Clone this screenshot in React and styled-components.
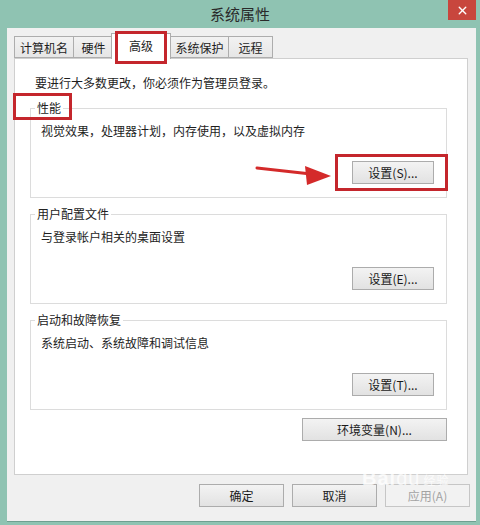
import React from 'react'
import styled, { createGlobalStyle } from 'styled-components'
import { X } from 'lucide-react'

const GlobalStyle = createGlobalStyle`
  html, body {
    margin: 0;
    padding: 0;
    background: #8fc3b2;
  }
  body {
    font-family: "Noto Sans CJK SC", "Noto Sans", sans-serif;
    font-size: 12px;
    color: #1e1e1e;
  }
`

const tabs = [
  { label: '计算机名', w: 60 },
  { label: '硬件', w: 41 },
  { label: '高级', w: 60, active: true },
  { label: '系统保护', w: 59 },
  { label: '远程', w: 45 },
]

const groups = [
  { title: '性能', desc: '视觉效果，处理器计划，内存使用，以及虚拟内存', btn: '设置(S)...' },
  { title: '用户配置文件', desc: '与登录帐户相关的桌面设置', btn: '设置(E)...' },
  { title: '启动和故障恢复', desc: '系统启动、系统故障和调试信息', btn: '设置(T)...' },
]

const App = () => {
  return (
    <>
      <GlobalStyle />
      <Window>
        <TitleBar>
          <span />
          <Title>系统属性</Title>
          <CloseButton>
            <X size={13} strokeWidth={2.6} color="#fff" />
          </CloseButton>
        </TitleBar>
        <Client>
          <TabStrip>
            {tabs.map((t) => (
              <Tab key={t.label} $w={t.w} $active={t.active}>
                {t.label}
              </Tab>
            ))}
          </TabStrip>
          <Panel>
            <Notice>要进行大多数更改，你必须作为管理员登录。</Notice>
            {groups.map((g) => (
              <Group key={g.title}>
                <Legend>{g.title}</Legend>
                <Desc>{g.desc}</Desc>
                <ButtonRow $top={22}>
                  <Button $w={82}>{g.btn}</Button>
                </ButtonRow>
              </Group>
            ))}
            <ButtonRow $top={6}>
              <Button $w={145}>环境变量(N)...</Button>
            </ButtonRow>
          </Panel>
          <DialogButtons>
            <Button $w={85}>确定</Button>
            <Button $w={85}>取消</Button>
            <Button $w={85} disabled>应用(A)</Button>
          </DialogButtons>
        </Client>

        {/* red annotation marks laid over the dialog */}
        <Mark style={{ left: 115, top: 31, width: 52, height: 33 }} />
        <Mark style={{ left: 13, top: 93, width: 59, height: 27 }} />
        <Mark style={{ left: 335, top: 154, width: 113, height: 37 }} />
        <Arrow width="80" height="30" viewBox="0 0 80 30">
          <line x1="2" y1="8" x2="56" y2="14" stroke="#d42a2a" strokeWidth="3" strokeLinecap="round" />
          <polygon points="76,16 50,6 52,25" fill="#d42a2a" />
        </Arrow>
        <Watermark>
          Bai<Paw>du</Paw>
          <small>经验</small>
        </Watermark>
      </Window>
    </>
  )
}

const Window = styled.div`
  position: relative;
  width: 480px;
  height: 525px;
  box-sizing: border-box;
  padding-bottom: 4px;
  display: flex;
  flex-direction: column;
  background: #8fc3b2;
  overflow: hidden;
`

const TitleBar = styled.div`
  height: 28px;
  display: grid;
  grid-template-columns: 1fr auto 1fr;
  align-items: start;
`

const Title = styled.div`
  line-height: 28px;
  font-size: 15px;
  color: #2a2a2a;
`

const CloseButton = styled.div`
  justify-self: end;
  width: 28px;
  height: 20px;
  margin-right: 4px;
  background: #c8463d;
  display: flex;
  align-items: center;
  justify-content: center;
`

const Client = styled.div`
  flex: 1;
  margin: 0 4px 0 7px;
  padding: 5px 8px 8px 7px;
  background: #f0f0f0;
  box-shadow: 0 1px 0 #6f9f90;
`

const TabStrip = styled.div`
  position: relative;
  z-index: 1;
  height: 25px;
  display: flex;
  align-items: flex-end;
`

const Tab = styled.div`
  box-sizing: border-box;
  width: ${(p) => p.$w}px;
  height: ${(p) => (p.$active ? 26 : 22)}px;
  margin-left: ${(p) => (p.$active ? -3 : -1)}px;
  margin-bottom: ${(p) => (p.$active ? -1 : 0)}px;
  border: 1px solid #adadad;
  border-bottom: ${(p) => (p.$active ? 'none' : '1px solid #adadad')};
  background: ${(p) => (p.$active ? '#fff' : 'linear-gradient(#f2f2f2, #e6e6e6)')};
  z-index: ${(p) => (p.$active ? 2 : 0)};
  display: flex;
  align-items: center;
  justify-content: center;
  padding-bottom: ${(p) => (p.$active ? 3 : 0)}px;
  font-size: 12px;
  color: #1e1e1e;

  &:first-child {
    margin-left: 0;
  }
`

const Panel = styled.div`
  background: #fff;
  border: 1px solid #cfcfcf;
  padding: 16px 20px 33px 15px;
`

const Notice = styled.p`
  margin: 0 0 9px 5px;
  line-height: 16px;
`

const Group = styled.fieldset`
  margin: 0 0 8px;
  min-width: 0;
  border: 1px solid #dcdcdc;
  padding: 7px 12px 13px 10px;
`

const Legend = styled.legend`
  padding: 0 2px;
  margin-left: -6px;
  line-height: 16px;
  color: #222;
`

const Desc = styled.p`
  margin: 0;
  line-height: 16px;
`

const ButtonRow = styled.div`
  display: flex;
  justify-content: flex-end;
  margin-top: ${(p) => p.$top}px;
`

const Button = styled.button`
  width: ${(p) => p.$w}px;
  height: 23px;
  padding: 0;
  border: 1px solid #acacac;
  background: linear-gradient(#f3f3f3, #e2e2e2);
  font-family: "Noto Sans CJK SC", "Noto Sans", sans-serif;
  font-size: 12px;
  color: #1a1a1a;

  &:disabled {
    border-color: #c6c6c6;
    background: #f2f2f2;
    color: #a3a3a3;
  }
`

const DialogButtons = styled.div`
  display: flex;
  justify-content: flex-end;
  gap: 8px;
  margin: 9px -2px 0 0;
`

const Mark = styled.div`
  position: absolute;
  z-index: 3;
  box-sizing: border-box;
  border: 3px solid #c4262c;
  pointer-events: none;
`

const Arrow = styled.svg`
  position: absolute;
  z-index: 3;
  left: 255px;
  top: 160px;
`

const Watermark = styled.div`
  position: absolute;
  z-index: 3;
  left: 362px;
  top: 468px;
  line-height: 20px;
  font-family: "Liberation Sans", Arial, sans-serif;
  font-size: 20px;
  font-weight: bold;
  color: rgba(255, 255, 255, 0.75);
  letter-spacing: 1px;

  small {
    font-family: "Noto Sans CJK SC", sans-serif;
    font-size: 12px;
    font-weight: normal;
    margin-left: 3px;
  }
`

const Paw = styled.span`
  font-weight: normal;
`

export default App
